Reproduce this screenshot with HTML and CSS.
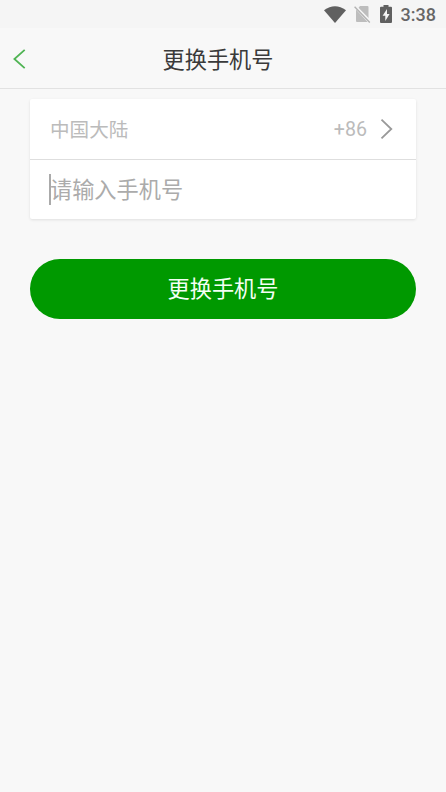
FILE: index.html
```html
<!DOCTYPE html>
<html lang="zh-CN">
<head>
<meta charset="utf-8">
<meta name="viewport" content="width=device-width, initial-scale=1">
<title>更换手机号</title>
<link rel="stylesheet" href="styles.css">
</head>
<body>
<div class="status-bar">
  <svg class="wifi" width="22" height="17" viewBox="0 0 22 17"><path d="M0 4.2Q11-3.5 22 4.2L11 17Z"/></svg>
  <svg class="no-sim" width="17" height="18" viewBox="0 0 17 18"><path d="M6 1h7.5q1 0 1 1v11.8L4.3 3Z"/><path d="M2 4.6 13.6 17H3q-1 0-1-1Z"/><path class="gap" d="M1.6.7 16.8 16.4"/><path class="slash" d="M.6 1.7 15.8 17.4"/></svg>
  <svg class="battery" width="12" height="18" viewBox="0 0 12 18"><path fill-rule="evenodd" d="M3.5 0h5v1.8H11q1 0 1 1V17q0 1-1 1H1q-1 0-1-1V2.8q0-1 1-1h2.5ZM7 4 2.6 10.7h2.7V16l4.3-7H7Z"/></svg>
  <span class="clock">3:38</span>
</div>
<header class="header">
  <button class="back" aria-label="返回"><svg width="14" height="22" viewBox="0 0 14 22"><path d="M12.7 1.8 2.4 11l10.3 9.2"/></svg></button>
  <h1 class="title">更换手机号</h1>
</header>
<main class="content">
  <section class="card">
    <div class="row region">
      <span class="country">中国大陆</span>
      <span class="code">+86</span>
      <svg class="chevron" width="14" height="22" viewBox="0 0 14 22"><path d="M1.5 1.6 11.3 11l-9.8 9.4"/></svg>
    </div>
    <div class="row phone"><span class="caret"></span><span class="placeholder">请输入手机号</span></div>
  </section>
  <button class="submit">更换手机号</button>
</main>
</body>
</html>
```
FILE: styles.css
```css
* {
  box-sizing: border-box;
}

body {
  margin: 0;
  min-height: 792px;
  background: #f8f8f8;
  font-family: Roboto, "Noto Sans CJK SC", sans-serif;
}

button {
  border: 0;
  padding: 0;
  font-family: inherit;
}

svg {
  display: block;
  flex: none;
}

.status-bar {
  height: 28px;
  padding: 0 10px 0 0;
  display: flex;
  align-items: center;
  justify-content: flex-end;
  background: #f5f5f5;
  fill: #606060;
}

.no-sim {
  margin-left: 8px;
  fill: #bdbdbd;
}

.gap,
.slash {
  fill: none;
  stroke: #b2b2b2;
  stroke-width: 1.4;
}

.gap {
  stroke: #f5f5f5;
}

.battery {
  margin-left: 9px;
}

.clock {
  margin: 2px 0 0 9px;
  font-size: 18px;
  line-height: 24px;
  font-weight: 500;
  color: #666;
}

.header {
  height: 61px;
  display: grid;
  grid-template-columns: 60px 1fr 60px;
  align-items: center;
  border-bottom: 1px solid #e2e2e2;
}

.back {
  width: 60px;
  height: 60px;
  padding: 2px 0 0 12px;
  background: none;
}

.back path {
  fill: none;
  stroke: #50b454;
  stroke-width: 1.8;
}

.title {
  margin: 0;
  padding: 3px 10px 0 0;
  text-align: center;
  font-size: 22.2px;
  line-height: 32px;
  font-weight: 400;
  color: #3a3a3a;
}

.content {
  padding: 10px 30px 0;
}

.card {
  height: 120px;
  background: #fff;
  border-radius: 2px;
  box-shadow: 0 1px 3px rgba(0, 0, 0, 0.1);
}

.row {
  height: 60px;
  display: flex;
  align-items: center;
  padding: 0 22px 0 20px;
}

.region {
  height: 61px;
  border-bottom: 1px solid #dedede;
  font-size: 19.6px;
  color: #bbb;
}

.country {
  padding-bottom: 2px;
}

.code {
  margin-left: auto;
}

.chevron {
  margin-left: 13px;
}

.chevron path {
  fill: none;
  stroke: #999;
  stroke-width: 1.8;
}

.phone {
  height: 59px;
}

.caret {
  width: 2px;
  height: 31px;
  margin-left: -1px;
  background: #aaa;
}

.placeholder {
  margin-left: -1px;
  padding-bottom: 4px;
  font-size: 22.2px;
  color: #ababab;
}

.submit {
  display: block;
  width: 100%;
  height: 59.5px;
  padding-bottom: 4px;
  margin-top: 40px;
  border-radius: 30px;
  background: #090;
  color: #f4fff4;
  font-size: 22.2px;
}
```
